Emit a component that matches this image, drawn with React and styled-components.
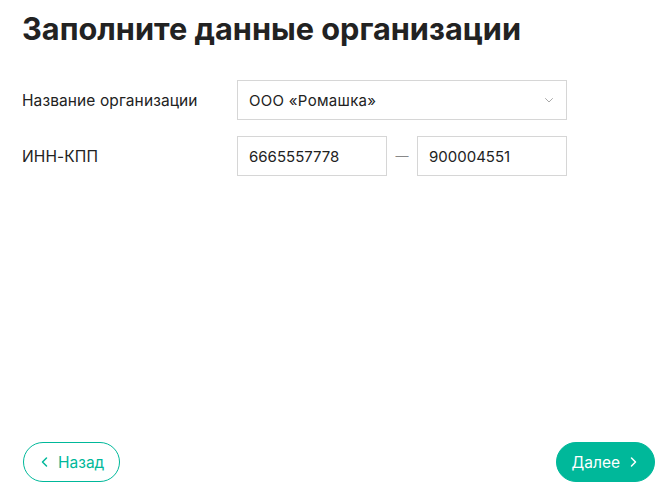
import React from "react";
import styled, { createGlobalStyle } from "styled-components";

const GlobalStyle = createGlobalStyle`
  html, body {
    margin: 0;
    padding: 0;
    background: #fff;
  }
  body {
    font-family: Inter, "Noto Sans", sans-serif;
    color: #222;
  }
`;

const green = "#00b89a";

const Page = styled.div`
  width: 670px;
  height: 496px;
  box-sizing: border-box;
  padding: 9px 15px 14px 22px;
  display: flex;
  flex-direction: column;
`;

const Title = styled.h1`
  margin: 0;
  font-size: 30.7px;
  line-height: 40px;
  font-weight: 700;
  color: #222;
`;

const Form = styled.div`
  margin-top: 31px;
  display: flex;
  flex-direction: column;
  gap: 16px;
  flex: 1;
`;

const Row = styled.div`
  display: grid;
  grid-template-columns: 215px 330px;
  align-items: center;
`;

const Label = styled.span`
  font-size: 15.5px;
  letter-spacing: 0.1px;
  color: #222;
`;

const Field = styled.div`
  box-sizing: border-box;
  width: ${(p) => p.width || 150}px;
  height: 40px;
  border: 1px solid #d6d6d6;
  padding: 0 11px;
  display: flex;
  align-items: center;
  justify-content: space-between;
  font-size: 15px;
  letter-spacing: ${(p) => p.spacing || 0}px;
  color: #222;
  background: #fff;
`;

const Pair = styled.div`
  display: flex;
  align-items: center;
`;

const Dash = styled.span`
  width: 30px;
  text-align: center;
  color: #888;
  font-size: 13px;
`;

const Footer = styled.div`
  display: flex;
  justify-content: space-between;
  align-items: center;
  padding-left: 1px;
`;

const Button = styled.button`
  box-sizing: border-box;
  height: 40px;
  border-radius: 20px;
  padding: ${(p) => (p.primary ? "0 15px 0 15px" : "0 15px 0 15px")};
  border: 1px solid ${green};
  background: ${(p) => (p.primary ? green : "#fff")};
  color: ${(p) => (p.primary ? "#fff" : green)};
  font-family: Inter, "Noto Sans", sans-serif;
  font-size: 15.5px;
  display: flex;
  align-items: center;
  gap: 7px;
  cursor: pointer;
`;

const Chevron = ({ dir, size = 12, color = "currentColor", width = 1.5 }) => (
  <svg width={size} height={size} viewBox="0 0 12 12" fill="none">
    <path
      d={
        dir === "left"
          ? "M7.5 2 L3.5 6 L7.5 10"
          : dir === "right"
          ? "M4.5 2 L8.5 6 L4.5 10"
          : "M2.5 4.5 L6 8 L9.5 4.5"
      }
      stroke={color}
      strokeWidth={width}
      strokeLinecap="round"
      strokeLinejoin="round"
    />
  </svg>
);

export default function App() {
  return (
    <>
      <GlobalStyle />
      <Page>
        <Title>Заполните данные организации</Title>
        <Form>
          <Row>
            <Label>Название организации</Label>
            <Field width={330} spacing={0.3}>
              ООО «Ромашка»
              <Chevron dir="down" size={12} color="#aaa" width={1} />
            </Field>
          </Row>
          <Row>
            <Label>ИНН-КПП</Label>
            <Pair>
              <Field>6665557778</Field>
              <Dash>—</Dash>
              <Field>900004551</Field>
            </Pair>
          </Row>
        </Form>
        <Footer>
          <Button>
            <Chevron dir="left" />
            Назад
          </Button>
          <Button primary>
            Далее
            <Chevron dir="right" />
          </Button>
        </Footer>
      </Page>
    </>
  );
}
